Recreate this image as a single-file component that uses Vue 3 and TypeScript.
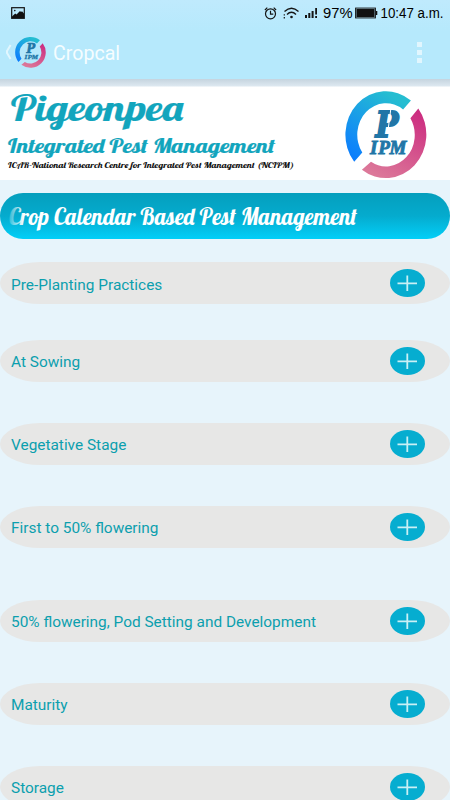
<script setup lang="ts">
interface Stage {
  label: string
  gap: number
}

const stages: Stage[] = [
  { label: 'Pre-Planting Practices', gap: 23 },
  { label: 'At Sowing', gap: 35.6 },
  { label: 'Vegetative Stage', gap: 41 },
  { label: 'First to 50% flowering', gap: 41 },
  { label: '50% flowering, Pod Setting and Development', gap: 52 },
  { label: 'Maturity', gap: 41 },
  { label: 'Storage', gap: 41 },
]
</script>

<template>
  <div class="screen">
    <header class="top">
      <div class="status">
        <svg class="picture" width="14" height="12" viewBox="0 0 14 12">
          <rect x=".7" y=".7" width="12.6" height="10.6" fill="none" stroke="#111" stroke-width="1.2" />
          <path d="M1 9.5 4.2 6.5 5.5 7.5 9 4 10 5 11 4.3 13 6.5V11H1Z" fill="#111" />
          <circle cx="3.8" cy="3.6" r=".8" fill="#111" />
        </svg>
        <svg class="tray" width="186" height="24" viewBox="0 0 186 24">
          <g fill="none" stroke="#151515" stroke-width="1.2">
            <circle cx="6.5" cy="13.8" r="5" />
            <path d="M6.5 10.8V14.2H9.3M.9 10 3.3 7.6M12.1 10 9.7 7.6" />
            <path d="M20.5 11.5Q27.5 4.8 34.5 11.5M23 14.5Q27.5 10.2 32 14.5" stroke-width="1.4" />
            <path d="M20.3 14.2V18.5" stroke-dasharray="1.4 1.5" />
          </g>
          <circle cx="27.5" cy="17" r="1.3" fill="#151515" />
          <path d="M41 15h2v3h-2zM44.3 13h2v5h-2zM47.6 11h2v7h-2zM51.2 8h1.8v6.5h-1.8zM51.2 16h1.8v2h-1.8z" fill="#151515" />
          <text x="59" y="18.2" textLength="29.5" lengthAdjust="spacingAndGlyphs">97%</text>
          <rect x="91.6" y="8.1" width="19.8" height="9.8" fill="none" stroke="#151515" />
          <path d="M92.4 9h18.2v8H92.4zM111.8 11h1.5v4h-1.5z" fill="#111" />
          <text x="116.5" y="18.2" textLength="63" lengthAdjust="spacingAndGlyphs">10:47 a.m.</text>
        </svg>
      </div>
      <div class="bar">
        <svg class="back" width="8" height="18" viewBox="0 0 8 18">
          <path d="M6.6 2 3 8V10L6.6 16" fill="none" stroke="#e1f6fe" stroke-width="2" />
        </svg>
        <svg class="mark" viewBox="0 0 82 88" preserveAspectRatio="none">
          <use href="#ipm-logo" />
        </svg>
        <h1>Cropcal</h1>
        <div class="menu"><i /><i /><i /></div>
      </div>
    </header>

    <section class="banner">
      <svg class="titles" width="310" height="93" viewBox="0 0 310 93">
        <g class="script" fill="#12a5bd" stroke="#12a5bd" stroke-width=".2">
          <text x="11" y="33.8" font-size="34.5" textLength="172" lengthAdjust="spacingAndGlyphs">Pigeonpea</text>
          <text x="8" y="65.8" font-size="19" textLength="267" lengthAdjust="spacingAndGlyphs">Integrated Pest Management</text>
          <text x="8" y="81.3" font-size="8.5" fill="#111" stroke="none" textLength="286" lengthAdjust="spacingAndGlyphs">ICAR-National Research Centre for Integrated Pest Management (NCIPM)</text>
        </g>
      </svg>
      <svg class="logo" width="82" height="88" viewBox="0 0 82 88">
        <defs>
          <linearGradient id="blue" x1="0" y1="1" x2=".6" y2="0">
            <stop stop-color="#0878ff" />
            <stop offset=".3" stop-color="#128bf5" />
            <stop offset="1" stop-color="#25bdd1" />
          </linearGradient>
          <linearGradient id="pink" x1=".8" y1="0" x2=".3" y2="1">
            <stop stop-color="#cc2c80" />
            <stop offset="1" stop-color="#dc7899" />
          </linearGradient>
          <g id="ipm-logo">
            <path d="M9.2 70.8A40.5 43.5 0 0 1 65.9 9.5L58.1 18.5A28.7 31.5 0 0 0 17.3 61.6Z" fill="url(#blue)" />
            <path d="M73.3 17.6A40.5 43.5 0 0 1 16.9 78.7L26 70.7A28.7 31.5 0 0 0 65.4 27.2Z" fill="url(#pink)" />
            <g class="letters">
              <text class="initial" x="30.5" y="45.5" font-size="35.5" stroke-width="1.8" textLength="23" lengthAdjust="spacingAndGlyphs">P</text>
              <text x="25 33.2 44.6" y="62.8" font-size="19" stroke-width=".9">IPM</text>
            </g>
          </g>
        </defs>
        <use href="#ipm-logo" />
        <path d="M45.8 18 43.2 38" stroke="#fff" stroke-width="1" />
      </svg>
    </section>

    <div class="heading">
      <svg width="450" height="46" viewBox="0 0 450 46">
        <defs>
          <linearGradient id="fade" gradientUnits="userSpaceOnUse" x1="8" y1="0" x2="24" y2="0">
            <stop stop-color="#fff" stop-opacity=".1" />
            <stop offset="1" stop-color="#fff" />
          </linearGradient>
        </defs>
        <text class="script" x="9" y="31.5" font-size="23" fill="url(#fade)" textLength="348" lengthAdjust="spacingAndGlyphs">Crop Calendar Based Pest Management</text>
      </svg>
    </div>

    <ul class="stages">
      <li v-for="stage in stages" :key="stage.label" :style="{ marginTop: stage.gap + 'px' }">
        <span>{{ stage.label }}</span>
        <button type="button" :aria-label="stage.label">
          <svg width="35" height="28" viewBox="0 0 35 28">
            <ellipse cx="17.5" cy="14" rx="17.5" ry="14" fill="#06add0" />
            <path d="M7.5 14.3H27M17.3 6.5V22" stroke="#c9f0f5" stroke-width="1.8" />
          </svg>
        </button>
      </li>
    </ul>
  </div>
</template>

<style>
body {
  overflow: hidden;
}
</style>

<style scoped>
.screen {
  width: 450px;
  height: 800px;
  overflow: hidden;
  background: #e7f4fb;
  font-family: Roboto, "Liberation Sans", sans-serif;
}
.top {
  height: 79px;
  background: linear-gradient(#bfeafd, #b6e9fc 40%);
}
.status {
  height: 27px;
  display: flex;
  justify-content: space-between;
  align-items: flex-start;
  padding: 0 0 0 11px;
}
.picture {
  margin-top: 7px;
}
.tray {
  font-family: "Liberation Sans", sans-serif;
  font-size: 14px;
}
.bar {
  height: 52px;
  box-sizing: border-box;
  display: flex;
  align-items: center;
  padding: 0 28px 2px 4px;
}
.back {
  flex: none;
}
.mark {
  width: 31px;
  height: 31px;
  margin-left: 3px;
}
h1 {
  margin: 3px 0 0 7px;
  color: #f5fdff;
  font-size: 19.6px;
  font-weight: 400;
  line-height: 24px;
}
.menu {
  display: grid;
  gap: 3px;
  margin-left: auto;
}
.menu i {
  width: 5px;
  height: 5px;
  background: #e1f6fe;
}
.banner {
  height: 101px;
  padding-top: 8px;
  box-sizing: border-box;
  display: flex;
  background: linear-gradient(#c5d4df, #dde8f0 7px, #fff 8px);
}
.logo {
  margin: 4px 0 0 35px;
}
.script {
  font-family: Lobster, "Liberation Serif", serif;
  font-weight: 400;
}
.letters {
  fill: #2176a7;
  stroke: #2176a7;
  font-family: "Liberation Serif", serif;
  font-style: italic;
  font-weight: 700;
}
.initial {
  font-family: "DejaVu Serif", "Liberation Serif", serif;
}
.heading {
  height: 46px;
  margin-top: 13px;
  border-radius: 23px;
  overflow: hidden;
  background: linear-gradient(#059fbd, #05abce 50%, #02cff8);
}
.heading svg {
  display: block;
}
.stages {
  list-style: none;
  margin: 0;
  padding: 0;
}
li {
  height: 42px;
  display: flex;
  justify-content: space-between;
  align-items: center;
  padding: 0 25px 0 11px;
  box-sizing: border-box;
  border-radius: 40px / 21px;
  background: #e7e7e6;
}
li span {
  color: #0c9fae;
  font-size: 15.4px;
  line-height: 20px;
  padding-top: 3px;
}
button {
  display: flex;
  padding: 0;
  border: 0;
  background: none;
}
</style>
